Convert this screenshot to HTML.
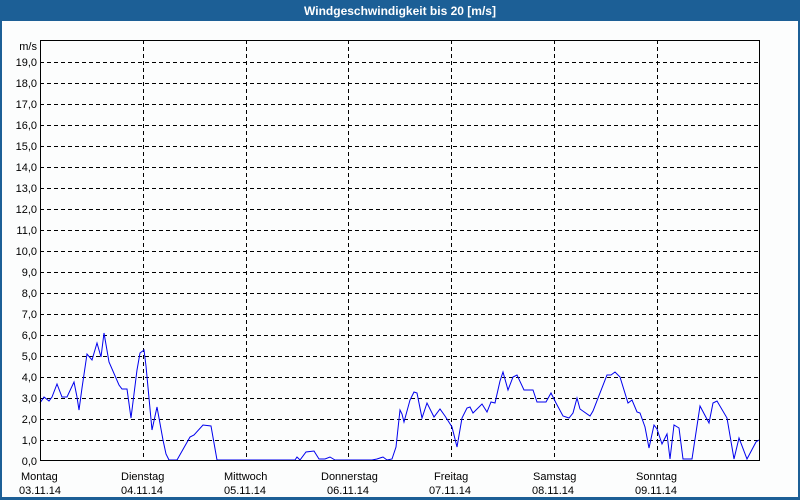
<!DOCTYPE html>
<html><head><meta charset="utf-8"><style>
body{margin:0;width:800px;height:500px;overflow:hidden;background:#fff;font-family:"Liberation Sans",sans-serif}
</style></head><body>
<svg width="800" height="500" xmlns="http://www.w3.org/2000/svg" style="display:block" font-family="Liberation Sans, DejaVu Sans, sans-serif">
<rect x="0" y="0" width="800" height="500" fill="#1c5f96"/>
<rect x="2" y="21" width="796" height="476" fill="#fcfdfd"/>
<text x="400" y="15" fill="#fff" font-size="12" font-weight="bold" text-anchor="middle">Windgeschwindigkeit bis 20 [m/s]</text>
<g stroke="#000" stroke-width="1" stroke-dasharray="4,3" fill="none">
<path d="M40 440.5H760M40 419.5H760M40 398.5H760M40 377.5H760M40 356.5H760M40 335.5H760M40 314.5H760M40 293.5H760M40 272.5H760M40 251.5H760M40 230.5H760M40 209.5H760M40 188.5H760M40 167.5H760M40 146.5H760M40 125.5H760M40 104.5H760M40 83.5H760M40 62.5H760"/>
<path d="M143.5 40V460M246.5 40V460M348.5 40V460M451.5 40V460M554.5 40V460M657.5 40V460"/>
</g>
<g font-size="11" fill="#000" text-anchor="end">
<text x="37" y="50">m/s</text>
<text x="37" y="66">19,0</text><text x="37" y="87">18,0</text><text x="37" y="108">17,0</text><text x="37" y="129">16,0</text><text x="37" y="150">15,0</text><text x="37" y="171">14,0</text><text x="37" y="192">13,0</text><text x="37" y="213">12,0</text><text x="37" y="234">11,0</text><text x="37" y="255">10,0</text><text x="37" y="276">9,0</text><text x="37" y="297">8,0</text><text x="37" y="318">7,0</text><text x="37" y="339">6,0</text><text x="37" y="360">5,0</text><text x="37" y="381">4,0</text><text x="37" y="402">3,0</text><text x="37" y="423">2,0</text><text x="37" y="444">1,0</text><text x="37" y="465">0,0</text>
</g>
<g font-size="11" fill="#000">
<text x="21" y="480">Montag</text><text x="19" y="494">03.11.14</text>
<text x="121" y="480">Dienstag</text><text x="121" y="494">04.11.14</text>
<text x="224" y="480">Mittwoch</text><text x="224" y="494">05.11.14</text>
<text x="321" y="480">Donnerstag</text><text x="327" y="494">06.11.14</text>
<text x="434" y="480">Freitag</text><text x="429" y="494">07.11.14</text>
<text x="533" y="480">Samstag</text><text x="532" y="494">08.11.14</text>
<text x="636" y="480">Sonntag</text><text x="635" y="494">09.11.14</text>
</g>
<polyline fill="none" stroke="#0000ee" stroke-width="1" points="40,403 44,397 49,401 52,397 57,384 62,397 67,397 74,382 77,397 79,410 82,388 87,354 92,360 97,343 101,357 104,333 109,362 119,385 122,389 127,389 131,418 137,370 140,353 144,350 146,366 152,430 157,407 163,440 166,454 169,460 177,460 190,437 194,435 203,425 211,426 217,460 295,460 297,457 300,460 306,452 314,451 319,459 325,459 330,457 335,460 372,460 377,459 383,457 387,460 392,459 396,447 400,410 402,414 404,422 410,400 414,392 417,393 422,418 427,403 434,417 440,409 445,416 452,427 457,447 462,418 467,408 470,407 473,413 482,404 487,412 491,402 495,403 500,381 503,372 508,390 513,377 517,375 524,390 533,390 537,402 546,402 551,393 556,403 563,416 569,418 573,413 577,398 580,409 590,416 593,411 607,375 611,375 615,372 620,377 628,403 632,400 637,412 640,413 645,427 649,448 654,425 657,429 662,444 667,434 670,459 674,425 679,428 683,459 692,459 700,406 709,423 713,403 717,401 727,418 734,459 739,438 747,459 756,442 759,440"/>
<rect x="40.5" y="40.5" width="719" height="420" fill="none" stroke="#000"/>
</svg>
</body></html>
